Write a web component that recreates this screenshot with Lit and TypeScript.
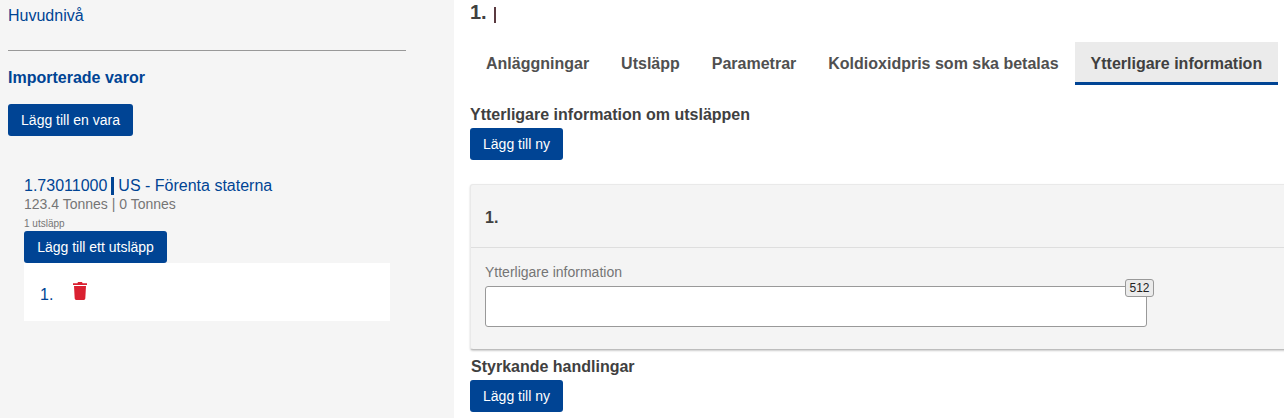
import { LitElement, html, css } from "lit";
import { customElement } from "lit/decorators.js";

@customElement("app-root")
export class AppRoot extends LitElement {
  static styles = css`
    :host { display: flex; width: 1284px; height: 418px; overflow: hidden; background: #fff; font-family: "Liberation Sans", Arial, sans-serif; color: #404040; }
    * { box-sizing: border-box; }
    .side { width: 454px; flex: none; background: #f5f5f5; padding: 7px 0 0 8px; }
    .home { color: #004494; font-size: 16px; line-height: 18px; }
    .rule { width: 398px; height: 1px; background: #999; margin-top: 25px; }
    .side h2 { margin: 18px 0 0; color: #004494; font-size: 16px; line-height: 18px; font-weight: 700; }
    .btn { display: inline-flex; align-items: center; justify-content: center; height: 32px; padding: 0 13px; border: 0; border-radius: 3px; background: #004494; color: #fff; font: 14px "Liberation Sans", Arial, sans-serif; }
    .side .add { margin-top: 17px; display: flex; width: 125px; }
    .item { margin: 41px 0 0 16px; width: 366px; }
    .code { color: #004494; font-size: 16px; line-height: 18px; display: flex; align-items: center; }
    .bar { width: 3px; height: 18px; background: #004494; margin: 0 4px 0 4px; }
    .mass { color: #757575; font-size: 14px; line-height: 16px; margin-top: 1px; }
    .count { color: #757575; font-size: 10px; line-height: 12px; margin-top: 6px; }
    .item .btn { display: flex; width: 143px; margin-top: 1px; }
    .emission { height: 58px; background: #fff; display: flex; align-items: flex-start; padding: 20px 0 0 16px; color: #004494; font-size: 16px; line-height: 24px; }
    .emission svg { margin: -1px 0 0 20px; }
    .main { flex: 1; min-width: 0; padding: 2px 0 0 16px; }
    .title { height: 20px; font-size: 20px; line-height: 20px; font-weight: 700; color: #404040; display: flex; align-items: flex-start; }
    .cursor { width: 2px; height: 16px; background: #5a3a40; margin: 5px 0 0 7px; }
    .tabs { display: flex; margin-top: 20px; height: 43px; }
    .tab { padding: 4px 16px 3px; display: flex; align-items: center; font-size: 16px; font-weight: 700; color: #505050; white-space: nowrap; }
    .tab.active { background: #ebebeb; color: #404040; border-bottom: 3px solid #004494; padding-bottom: 0; }
    .head { margin: 21px 0 0; font-size: 16px; line-height: 18px; font-weight: 700; color: #404040; }
    .main .btn { display: flex; width: 93px; margin-top: 4px; padding: 0; }
    .card { margin-top: 24px; width: 830px; height: 166px; background: #f4f4f4; border: 1px solid #e9e9e9; border-bottom-color: #bdbdbd; border-radius: 3px 0 0 3px; box-shadow: 0 1px 2px rgba(0,0,0,.2); }
    .card-head { height: 63px; border-bottom: 1px solid #dedede; padding: 4px 14px 0; display: flex; align-items: center; font-size: 16px; font-weight: 700; color: #404040; }
    .field { padding: 16px 14px 0; }
    .field label { display: block; color: #757575; font-size: 14px; line-height: 16px; }
    .wrap { position: relative; width: 662px; height: 41px; margin-top: 6px; background: #fff; border: 1px solid #999; border-radius: 3px; }
    .badge { position: absolute; right: -8px; top: -8px; width: 29px; height: 18px; background: #ebebeb; border: 1px solid #999; border-radius: 3px; color: #222; font-size: 12px; line-height: 16px; text-align: center; }
    .docs { margin: 8px 0 0 1px; }
  `;

  render() {
    return html`
      <aside class="side">
        <div class="home">Huvudnivå</div>
        <div class="rule"></div>
        <h2>Importerade varor</h2>
        <button class="btn add">Lägg till en vara</button>
        <div class="item">
          <div class="code">1.73011000<span class="bar"></span>US - Förenta staterna</div>
          <div class="mass">123.4 Tonnes | 0 Tonnes</div>
          <div class="count">1 utsläpp</div>
          <button class="btn">Lägg till ett utsläpp</button>
          <div class="emission">
            1.
            <svg width="14" height="18" viewBox="0 0 14 18" fill="#da2131" aria-hidden="true">
              <path d="M5 0h4l.6 1.2H14V3H0V1.2h4.4z" />
              <path d="M1 4h12l-.7 12.6A1.5 1.5 0 0 1 10.8 18H3.2a1.5 1.5 0 0 1-1.5-1.4z" />
            </svg>
          </div>
        </div>
      </aside>
      <main class="main">
        <div class="title">1.<span class="cursor"></span></div>
        <nav class="tabs">
          <div class="tab">Anläggningar</div>
          <div class="tab">Utsläpp</div>
          <div class="tab">Parametrar</div>
          <div class="tab">Koldioxidpris som ska betalas</div>
          <div class="tab active">Ytterligare information</div>
        </nav>
        <div class="head">Ytterligare information om utsläppen</div>
        <button class="btn">Lägg till ny</button>
        <section class="card">
          <div class="card-head">1.</div>
          <div class="field">
            <label>Ytterligare information</label>
            <div class="wrap"><span class="badge">512</span></div>
          </div>
        </section>
        <div class="head docs">Styrkande handlingar</div>
        <button class="btn">Lägg till ny</button>
      </main>
    `;
  }
}
